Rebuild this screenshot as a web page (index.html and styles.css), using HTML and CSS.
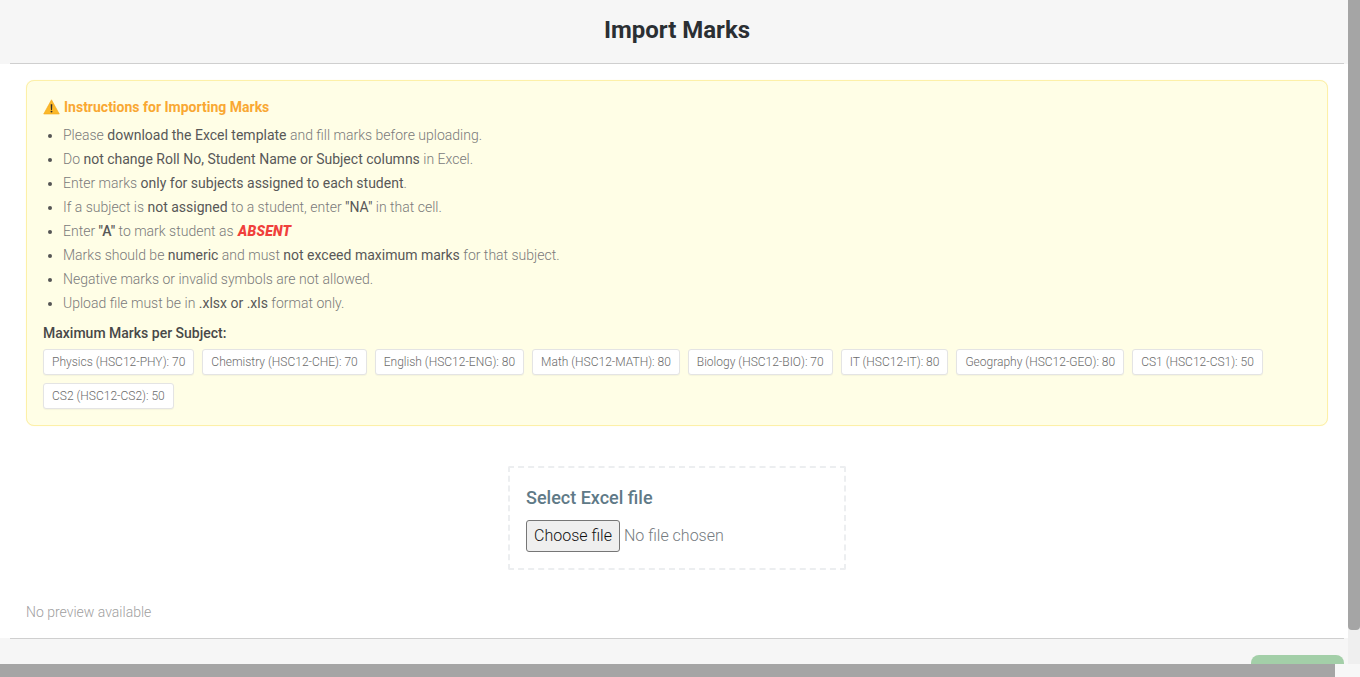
FILE: index.html
```html
<!DOCTYPE html>
<html lang="en">
<head>
<meta charset="utf-8">
<title>Import Marks</title>
<link rel="stylesheet" href="styles.css">
</head>
<body>
<div class="screen">
  <div class="viewport">
    <div class="modal">
      <header class="modal-header"><h1>Import Marks</h1></header>
      <main class="modal-body">
        <section class="notice">
          <h2 class="notice-title"><span class="warn-icon"><svg viewBox="0 0 16 16" width="17" height="16"><path d="M8 .8 15.8 15H.2Z" fill="#fbb829" stroke="#f4a71d" stroke-width=".6" stroke-linejoin="round"/><path d="M7.2 5.2h1.6l-.3 5.7h-1Z" fill="#2c2c2c"/><circle cx="8" cy="12.6" r=".95" fill="#2c2c2c"/></svg></span>Instructions for Importing Marks</h2>
          <ul class="rules">
            <li>Please <b>download the Excel template</b> and fill marks before uploading.</li>
            <li>Do <b>not change Roll No, Student Name or Subject columns</b> in Excel.</li>
            <li>Enter marks <b>only for subjects assigned to each student</b>.</li>
            <li>If a subject is <b>not assigned</b> to a student, enter <b>"NA"</b> in that cell.</li>
            <li>Enter <b class="code">"A"</b> to mark student as <b class="absent">ABSENT</b></li>
            <li>Marks should be <b>numeric</b> and must <b>not exceed maximum marks</b> for that subject.</li>
            <li>Negative marks or invalid symbols are not allowed.</li>
            <li>Upload file must be in <b>.xlsx or .xls</b> format only.</li>
          </ul>
          <h3 class="max-title">Maximum Marks per Subject:</h3>
          <div class="chips">
            <span class="chip">Physics (HSC12-PHY): 70</span>
            <span class="chip">Chemistry (HSC12-CHE): 70</span>
            <span class="chip">English (HSC12-ENG): 80</span>
            <span class="chip">Math (HSC12-MATH): 80</span>
            <span class="chip">Biology (HSC12-BIO): 70</span>
            <span class="chip">IT (HSC12-IT): 80</span>
            <span class="chip">Geography (HSC12-GEO): 80</span>
            <span class="chip">CS1 (HSC12-CS1): 50</span>
            <span class="chip">CS2 (HSC12-CS2): 50</span>
          </div>
        </section>
        <div class="upload-wrap">
          <div class="upload">
            <label class="upload-label" for="file">Select Excel file</label>
            <div class="file-row"><button class="file-btn" type="button" id="file">Choose file</button><span class="file-name">No file chosen</span></div>
          </div>
        </div>
        <p class="preview">No preview available</p>
      </main>
      <footer class="modal-footer"><span class="save"></span></footer>
    </div>
    <div class="scrollbar"><div class="thumb"></div></div>
  </div>
  <div class="backdrop"><div class="corner"></div></div>
</div>
</body>
</html>
```
FILE: styles.css
```css
* { box-sizing: border-box; }
html, body { margin: 0; height: 100%; overflow: hidden; }
body { font-family: Roboto, "Liberation Sans", sans-serif; background: #a5a5a5; color: #212529; }
.screen { height: 677px; display: flex; flex-direction: column; overflow: hidden; }
.viewport { display: flex; height: 664px; flex: none; }
.modal { width: 1348px; height: 664px; background: #fff; display: flex; flex-direction: column; }
.modal-header { height: 64px; flex: none; background: #f6f6f6; position: relative; display: flex; align-items: center; justify-content: center; padding: 0 0 4px 6px; }
.modal-header::after { content: ""; position: absolute; left: 10px; right: 4px; bottom: 0; height: 1px; background: #cfcfcf; }
h1 { margin: 0; font-size: 24px; line-height: 32px; font-weight: 700; color: #2b2f33; }
.modal-body { flex: 1; padding: 16px 20px 0 26px; min-height: 0; }
.notice { height: 346px; background: #fffee6; border: 1px solid #fdf0a8; border-radius: 8px; padding: 16px 16px 0; box-shadow: 0 0 1px #fdf6c0; }
.notice-title { margin: 0; display: flex; align-items: center; font-size: 14px; line-height: 20px; font-weight: 700; color: #f9a833; }
.warn-icon { display: flex; margin-right: 4px; }
.rules { margin: 6px 0 0; padding: 0 0 0 20px; font-size: 14px; line-height: 24px; color: #7a7a7a; font-weight: 300; list-style: disc; }
.rules li::marker { color: #555; }
.rules b { font-weight: 400; color: #585858; }
.rules .code { font-weight: 500; }
.rules .absent { font-weight: 900; font-style: italic; color: #f0403c; letter-spacing: .2px; margin-left: 1px; }
.max-title { margin: 8px 0 0; font-size: 14px; line-height: 21px; font-weight: 500; color: #484848; }
.chips { display: flex; flex-wrap: wrap; gap: 8px; margin-top: 5px; }
.chip { height: 26px; display: flex; align-items: center; padding: 0 8px; font-size: 12px; font-weight: 300; color: #6c6c6c; background: #fff; border: 1px solid #e4e4e4; border-radius: 3px; box-shadow: 0 1px 1px rgba(0,0,0,.04); }
.upload-wrap { display: flex; justify-content: center; margin-top: 40px; }
.upload { width: 338px; height: 104px; border: 2px dashed #eceef0; border-radius: 2px; padding: 19px 16px 0; }
.upload-label { display: block; font-size: 18px; line-height: 22px; font-weight: 500; color: #5f7a87; }
.file-row { display: flex; align-items: center; margin-top: 11px; }
.file-btn { width: 94px; height: 32px; padding: 0 0 2px; font: 300 16px Roboto, sans-serif; color: #111; background: #efefef; border: 1px solid #767676; border-radius: 3px; }
.file-name { margin: 0 0 2px 4px; font-size: 16px; font-weight: 300; color: #757b80; }
.preview { margin: 32px 0 0; font-size: 14px; line-height: 20px; font-weight: 300; color: #a0a0a0; }
.modal-footer { height: 26px; flex: none; background: #f6f6f6; position: relative; overflow: hidden; }
.modal-footer::before { content: ""; position: absolute; left: 10px; right: 4px; top: 0; height: 1px; background: #cfcfcf; }
.save { position: absolute; left: 1251px; top: 17px; width: 93px; height: 30px; background: #a3cfa8; border-radius: 8px; }
.scrollbar { width: 12px; flex: none; background: #efefef; }
.thumb { height: 630px; background: #a5a5a5; border-radius: 0 0 4px 4px; }
.backdrop { flex: 1; background: #a5a5a5; display: flex; justify-content: flex-end; }
.corner { width: 25px; background: #f7f7f7; }
```
